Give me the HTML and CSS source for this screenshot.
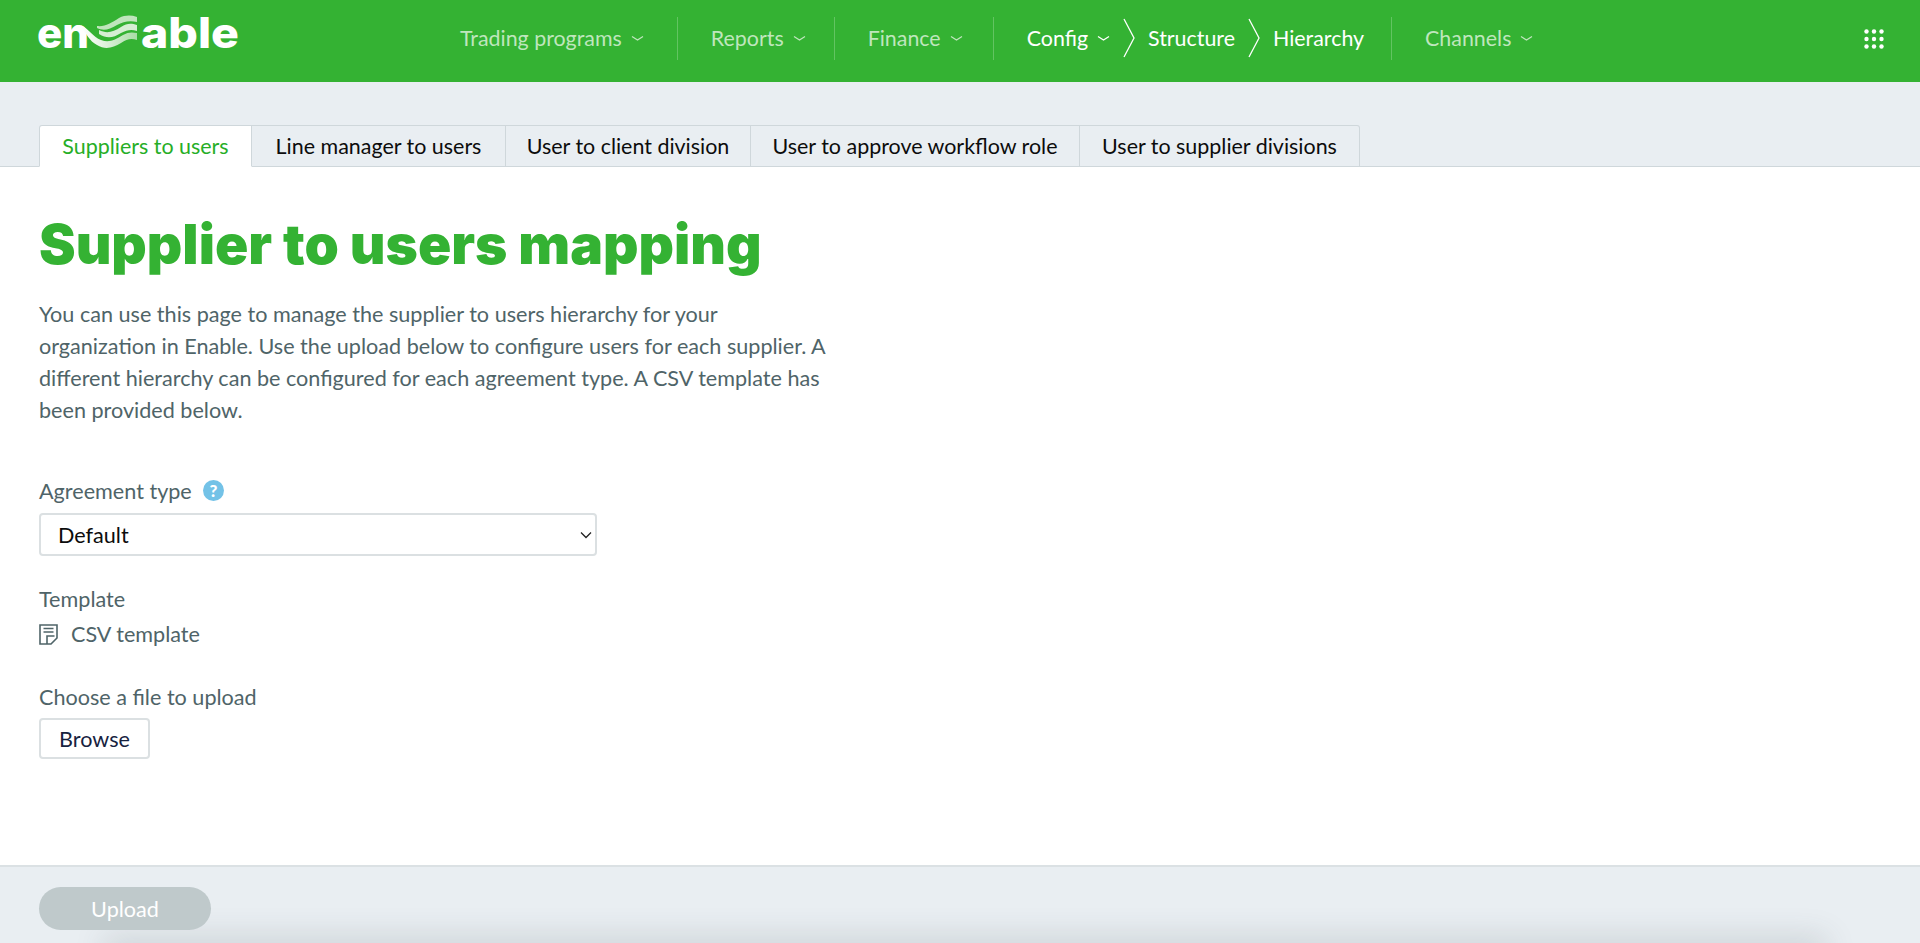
FILE: index.html
```html
<!DOCTYPE html>
<html lang="en">
<head>
<meta charset="utf-8">
<title>Supplier to users mapping</title>
<link rel="stylesheet" href="styles.css">
</head>
<body>
<header class="topbar">
  <a class="logo" aria-label="Enable">
    <svg class="logo-svg" width="200" height="42" viewBox="0 0 200 42">
      <defs>
        <linearGradient id="wave" x1="0" y1="0" x2="1" y2="0">
          <stop offset="0" stop-color="#fff"/>
          <stop offset=".35" stop-color="#e4f4e2"/>
          <stop offset="1" stop-color="#a9dca6"/>
        </linearGradient>
      </defs>
      <text class="logo-text" x="-2" y="35" textLength="52" lengthAdjust="spacingAndGlyphs">en</text>
      <text class="logo-text" x="102" y="35" textLength="98" lengthAdjust="spacingAndGlyphs">able</text>
      <path d="M58 13C66 14 72 10 80 5C86 2 92 2 98 4L98 9C90 7 84 9 78 12C70 17 64 18 58 15Z" fill="#bfe5bc"/>
      <path d="M60 17C68 21 74 19 82 14C88 10 92 10 98 12L98 18C92 16 88 17 82 20C74 25 68 26 60 21Z" fill="#d5eed3"/>
      <path d="M43 13C50 16 54 24 62 27C70 30 76 27 84 22C89 19 93 19 98 20L98 27C92 25 88 26 82 30C74 35 66 37 58 32C50 28 48 20 43 17Z" fill="url(#wave)"/>
    </svg>
  </a>
  <nav class="nav">
    <a class="nav-item">Trading programs <svg class="chev" viewBox="0 0 13 7"><path d="M1 1.500l5.500 3.500 5.500-3.500"/></svg></a>
    <a class="nav-item">Reports <svg class="chev" viewBox="0 0 13 7"><path d="M1 1.500l5.500 3.500 5.500-3.500"/></svg></a>
    <a class="nav-item">Finance <svg class="chev" viewBox="0 0 13 7"><path d="M1 1.500l5.500 3.500 5.500-3.500"/></svg></a>
    <div class="nav-item crumbs">
      <a class="crumb">Config <svg class="chev" viewBox="0 0 13 7"><path d="M1 1.500l5.500 3.500 5.500-3.500"/></svg></a>
      <svg class="angle" viewBox="0 0 12 40"><path d="M1 1l10 19-10 19"/></svg>
      <a class="crumb">Structure</a>
      <svg class="angle" viewBox="0 0 12 40"><path d="M1 1l10 19-10 19"/></svg>
      <a class="crumb">Hierarchy</a>
    </div>
    <a class="nav-item">Channels <svg class="chev" viewBox="0 0 13 7"><path d="M1 1.500l5.500 3.500 5.500-3.500"/></svg></a>
  </nav>
  <a class="apps" aria-label="Apps">
    <svg width="20" height="20" viewBox="0 0 20 20">
      <g fill="#fff">
        <circle cx="2.5" cy="2.5" r="2.2"/><circle cx="10" cy="2.5" r="2.2"/><circle cx="17.5" cy="2.5" r="2.2"/>
        <circle cx="2.5" cy="10" r="2.2"/><circle cx="10" cy="10" r="2.2"/><circle cx="17.5" cy="10" r="2.2"/>
        <circle cx="2.5" cy="17.5" r="2.2"/><circle cx="10" cy="17.5" r="2.2"/><circle cx="17.5" cy="17.5" r="2.2"/>
      </g>
    </svg>
  </a>
</header>

<div class="tabs-band">
  <ul class="tabs">
    <li class="tab active">Suppliers to users</li>
    <li class="tab">Line manager to users</li>
    <li class="tab">User to client division</li>
    <li class="tab">User to approve workflow role</li>
    <li class="tab">User to supplier divisions</li>
  </ul>
</div>

<main class="content">
  <h1 class="title">Supplier to users mapping</h1>
  <p class="intro">You can use this page to manage the supplier to users hierarchy for your organization in Enable. Use the upload below to configure users for each supplier. A different hierarchy can be configured for each agreement type. A CSV template has been provided below.</p>

  <div class="field field-agreement">
    <label class="label">Agreement type
      <svg class="help" viewBox="0 0 21 21"><circle cx="10.5" cy="10.5" r="10.5" fill="#73c2e7"/><text x="10.5" y="16.500" text-anchor="middle" class="help-mark">?</text></svg>
    </label>
    <div class="select-wrap">
      <select class="select"><option>Default</option></select>
      <svg class="select-arrow" viewBox="0 0 12 8"><path d="M1 1.500l5 5 5-5"/></svg>
    </div>
  </div>

  <div class="field field-template">
    <div class="label">Template</div>
    <a class="file-link">
      <svg class="doc" viewBox="0 0 19 21"><path d="M1 1H18V14L12 20H1Z M4.500 4.500H14.500 M4.500 8H14.500 M8 20V12H15.500"/></svg>
      CSV template
    </a>
  </div>

  <div class="field field-upload">
    <div class="label">Choose a file to upload</div>
    <button class="browse" type="button">Browse</button>
  </div>
</main>

<footer class="footer">
  <button class="upload" type="button" disabled>Upload</button>
</footer>
</body>
</html>
```
FILE: styles.css
```css
* { box-sizing: border-box; }
html, body { height: 100%; }
body {
  margin: 0;
  display: flex;
  flex-direction: column;
  height: 943px;
  overflow: hidden;
  background: #fff;
  font-family: "Lato", "Liberation Sans", sans-serif;
  font-size: 21.6px;
  color: #4f6468;
}
a { color: inherit; text-decoration: none; }

.topbar {
  flex: 0 0 82px;
  display: flex;
  align-items: center;
  background: #34b233;
  padding: 0 36px 6px 39px;
}
.logo { display: block; width: 200px; height: 42px; align-self: flex-start; margin-top: 13px; }
.logo-svg { overflow: visible; }
.logo-text { font-family: "Inter", sans-serif; font-weight: 800; font-size: 42px; fill: #fff; }

.nav { display: flex; align-items: center; margin-left: 221px; flex: 1; font-size: 21.4px; }
.nav-item {
  display: flex;
  align-items: center;
  gap: 9px;
  height: 43px;
  padding: 0 30px 0 33px;
  color: #bfe6bd;
  border-left: 1px solid #62c461;
  white-space: nowrap;
}
.nav-item:first-child { border-left: 0; padding-left: 0; padding-right: 33px; }
.nav-item:nth-child(2) { padding-right: 28px; }
.chev { width: 13px; height: 7px; fill: none; stroke: currentColor; stroke-width: 1.3; }
.crumbs { color: #fff; gap: 13px; padding-right: 27px; }
.crumb { display: flex; align-items: center; gap: 9px; }
.angle { width: 12px; height: 40px; fill: none; stroke: #fff; stroke-width: 1.3; }
.apps { display: block; width: 20px; height: 20px; }

.tabs-band {
  flex: 0 0 85px;
  display: flex;
  align-items: flex-end;
  background: #e9eef2;
  border-bottom: 1px solid #cfd7db;
  padding-left: 39px;
}
.tabs {
  display: grid;
  grid-template-columns: 213px 254px 245px 329px 280px;
  list-style: none;
  margin: 0 0 -1px;
  padding: 0;
  font-size: 21.45px;
}
.tab {
  height: 42px;
  display: flex;
  align-items: center;
  justify-content: center;
  color: #0c0c0c;
  background: #e9eef2;
  border: 1px solid #cfd7db;
  border-left: 0;
  white-space: nowrap;
}
.tab:last-child { border-top-right-radius: 3px; }
.tab.active {
  background: #fff;
  color: #26ae26;
  border-left: 1px solid #cfd7db;
  border-bottom-color: #fff;
  border-top-left-radius: 3px;
}

.content { flex: 1; padding: 0 39px; }
.title {
  margin: 42px 0 0;
  font-family: "Inter", "Lato", sans-serif;
  font-size: 55px;
  line-height: 70px;
  font-weight: 900;
  color: #34b233;
}
.intro { margin: 19px 0 0; width: 800px; line-height: 32px; }
.field { display: flex; flex-direction: column; }
.field-agreement { margin-top: 49px; }
.field-template { margin-top: 27px; }
.field-upload { margin-top: 31px; }
.label { display: flex; align-items: center; gap: 11px; line-height: 32px; }
.help { width: 21px; height: 21px; margin-top: -2px; }
.help-mark { font: 900 17px "Lato", sans-serif; fill: #fff; }
.select-wrap { position: relative; width: 558px; height: 43px; margin-top: 6px; }
.select {
  appearance: none;
  width: 100%;
  height: 100%;
  padding: 0 17px;
  border: 2px solid #dbe0e2;
  border-radius: 4px;
  background: #fff;
  font: inherit;
  color: #0c0c0c;
}
.select-arrow {
  position: absolute;
  right: 5px;
  top: 18px;
  width: 12px;
  height: 8px;
  fill: none;
  stroke: #222;
  stroke-width: 1.3;
  pointer-events: none;
}
.file-link { display: flex; align-items: center; gap: 13px; line-height: 32px; margin-top: 3px; }
.doc { width: 19px; height: 21px; fill: none; stroke: #4f6468; stroke-width: 1.6; }
.browse {
  align-self: flex-start;
  width: 111px;
  height: 41px;
  margin-top: 5px;
  background: #fff;
  border: 2px solid #dbe0e2;
  border-radius: 4px;
  font: inherit;
  color: #17233f;
}

.footer {
  flex: 0 0 78px;
  position: relative;
  overflow: hidden;
  display: flex;
  align-items: flex-start;
  padding: 20px 39px 0;
  background: #e9eef2;
  border-top: 2px solid #dbe1e4;
}
.footer::after {
  content: "";
  position: absolute;
  left: 110px;
  right: 100px;
  bottom: -14px;
  height: 14px;
  box-shadow: 0 0 30px 6px rgba(60, 70, 75, .17);
}
.upload {
  width: 172px;
  height: 43px;
  border: 0;
  border-radius: 22px;
  background: #bfc9cb;
  color: #fff;
  font: inherit;
  position: relative;
  z-index: 1;
}
```
